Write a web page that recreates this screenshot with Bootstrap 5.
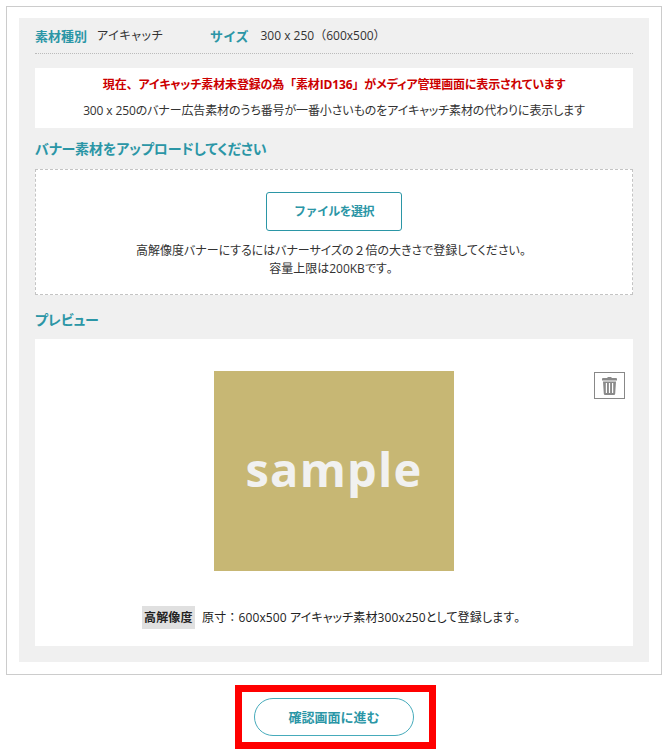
<!DOCTYPE html>
<html lang="ja">
<head>
<meta charset="utf-8">
<title>素材登録</title>
<link href="https://cdn.jsdelivr.net/npm/bootstrap@5.3.0/dist/css/bootstrap.min.css" rel="stylesheet">
<style>
body{font-family:"Open Sans","Noto Sans CJK JP",sans-serif;font-size:12px;line-height:18px;color:#333;background:#fff;font-feature-settings:"palt";padding:6px 10px 0 6px}
.fw-cjk{font-feature-settings:normal}
.frame-box{border:1px solid #ccc;padding:11px 12px 12px}
.panel-box{background:#f0f0f0;padding:9px 16px 16px}
.meta-row{height:27px;border-bottom:1px dotted #bbb;margin-bottom:14px;padding-bottom:9px}
.tl{color:#2b96a6;font-weight:700;font-size:13px}
.tl-a{margin-right:10px}
.tl-b{margin-left:47px;margin-right:11px;letter-spacing:1px}
.kana-w{letter-spacing:.6px}
.notice-box{background:#fff;height:60px;padding-top:8px}
.red-line{color:#c00;font-weight:700;margin-bottom:8px;letter-spacing:-.15px}
.gray-line{letter-spacing:-.12px}
.sec-h{color:#2b96a6;font-weight:700;font-size:14px;line-height:20px;margin:0;letter-spacing:-.1px}
.up-h{margin:11px 0 10px}
.drop-box{background:#fff;border:1px dashed #c4c4c4;height:126px;padding-top:22px}
.drop-txt{letter-spacing:-.03px}
.pick-btn{display:block;width:136px;height:39px;margin:0 auto 11px;border:1px solid #2b96a6;border-radius:3px;background:#fff;color:#2b96a6;font-weight:700;font-size:12px;padding:0;letter-spacing:-.6px}
.prev-h{margin:15px 0 9px}
.prev-box{background:#fff;height:307px;padding-top:32px}
.img-box{width:240px;height:200px;background:#c7b774;margin:0 auto 35px;padding-bottom:4px}
.img-txt{color:#f1f1f0;font-weight:700;font-size:47px;letter-spacing:1.2px;line-height:1}
.trash-btn{position:absolute;top:33px;right:8px;width:31px;height:27px;border:1px solid #888;background:#fff}
.tag-hd{background:#e0e0e0;font-weight:700;padding:3px 2.5px;margin-right:7px;display:inline-block;line-height:17px}
.cap-line{color:#222;letter-spacing:.12px}
.red-frame{width:201px;height:64px;border:7px solid #f00;margin:10px 0 0 229px;padding-left:12px}
.next-btn{width:160px;height:38px;border:1px solid #46abbb;border-radius:19px;background:#fff;color:#2b96a6;font-weight:700;font-size:13px;padding:0}
</style>
</head>
<body>
<div class="frame-box">
  <div class="panel-box">
    <div class="meta-row d-flex align-items-center">
      <span class="tl tl-a">素材種別</span><span class="kana-w">アイキャッチ</span>
      <span class="tl tl-b">サイズ</span><span>300 x 250<span class="fw-cjk">（</span>600x500<span class="fw-cjk">）</span></span>
    </div>
    <div class="notice-box text-center">
      <div class="red-line">現在<span class="fw-cjk">、</span>アイキャッチ素材未登録の為<span class="fw-cjk">「</span>素材ID136<span class="fw-cjk">」</span>がメディア管理画面に表示されています</div>
      <div class="gray-line">300 x 250のバナー広告素材のうち番号が一番小さいものをアイキャッチ素材の代わりに表示します</div>
    </div>
    <h2 class="sec-h up-h">バナー素材をアップロードしてください</h2>
    <div class="drop-box text-center">
      <button type="button" class="pick-btn">ファイルを選択</button>
      <div class="drop-txt">高解像度バナーにするにはバナーサイズの<span class="fw-cjk">２</span>倍の大きさで登録してください<span class="fw-cjk">。</span></div>
      <div>容量上限は200KBです<span class="fw-cjk">。</span></div>
    </div>
    <h2 class="sec-h prev-h">プレビュー</h2>
    <div class="prev-box position-relative text-center">
      <div class="img-box d-flex align-items-center justify-content-center"><span class="img-txt">sample</span></div>
      <button type="button" class="trash-btn d-flex align-items-center justify-content-center p-0" aria-label="削除">
        <svg width="15" height="18" viewBox="0 0 15 18"><path fill="#8a8a8a" d="M5.2 1 5.8 0h3.4l.6 1H14a1 1 0 0 1 1 1v1.4H0V2a1 1 0 0 1 1-1zM1 4.4h13l-.8 12.3a1.4 1.4 0 0 1-1.4 1.3H3.2a1.4 1.4 0 0 1-1.4-1.3z"/><path fill="#fff" d="M3.8 6h1.2v10H3.8zM6.9 6h1.2v10H6.9zM10 6h1.2v10H10z"/></svg>
      </button>
      <div class="cap-line"><span class="tag-hd">高解像度</span>原寸<span class="fw-cjk">：</span>600x500 アイキャッチ素材300x250として登録します<span class="fw-cjk">。</span></div>
    </div>
  </div>
</div>
<div class="red-frame d-flex align-items-center">
  <button type="button" class="next-btn">確認画面に進む</button>
</div>
<script src="https://cdn.jsdelivr.net/npm/bootstrap@5.3.0/dist/js/bootstrap.bundle.min.js"></script>
</body>
</html>
